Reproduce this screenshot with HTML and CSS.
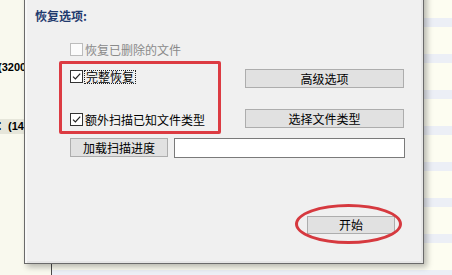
FILE: index.html
```html
<!DOCTYPE html>
<html lang="zh-CN">
<head>
<meta charset="utf-8">
<title>恢复选项</title>
<link rel="stylesheet" href="styles.css">
</head>
<body>
<div class="app">
  <div class="side">
    <div class="side-row r1">(3200MB)</div>
    <div class="side-row r2">：(14</div>
  </div>
  <div class="list"></div>
</div>

<div class="dialog">
  <div class="title">恢复选项:</div>
  <div class="opts">
    <label class="check disabled row1">
      <span class="box"></span><span class="lbl">恢复已删除的文件</span>
    </label>
    <div class="row row2">
      <label class="check">
        <span class="box"><svg viewBox="0 0 11 11" width="11" height="11"><path d="M2 5.6 L4.4 8 L9.2 2.6" fill="none" stroke="#222" stroke-width="1.2"/></svg></span><span class="lbl focus">完整恢复</span>
      </label>
      <button class="btn wide">高级选项</button>
    </div>
    <div class="row row3">
      <label class="check">
        <span class="box"><svg viewBox="0 0 11 11" width="11" height="11"><path d="M2 5.6 L4.4 8 L9.2 2.6" fill="none" stroke="#222" stroke-width="1.2"/></svg></span><span class="lbl">额外扫描已知文件类型</span>
      </label>
      <button class="btn wide">选择文件类型</button>
    </div>
    <div class="row row4">
      <button class="btn load">加载扫描进度</button>
      <input class="path" type="text" value="">
    </div>
    <div class="row row5">
      <button class="btn start">开始</button>
    </div>
  </div>
  <div class="mark mark-rect"></div>
  <div class="mark mark-ellipse"></div>
</div>
</body>
</html>
```

FILE: styles.css
```css
html, body {
  margin: 0;
  padding: 0;
}
body {
  width: 452px;
  height: 275px;
  overflow: hidden;
  position: relative;
  font-family: "Noto Sans CJK SC", "Microsoft YaHei", sans-serif;
  font-size: 12px;
  color: #000;
}

/* background application window */
.app {
  display: flex;
  height: 275px;
}
.side {
  flex: none;
  width: 51px;
  border-right: 1px solid #4a4a4a;
  background: #f9f9ee;
  display: flex;
  flex-direction: column;
}
.side-row {
  height: 15px;
  line-height: 15px;
  font-family: "Liberation Sans", "Noto Sans CJK SC", sans-serif;
  font-weight: bold;
  font-size: 11px;
  white-space: nowrap;
  text-indent: -2px;
  overflow: hidden;
}
.r1 {
  margin-top: 60px;
}
.r2 {
  margin-top: 44px;
  background: #e6e6da;
  text-indent: -3px;
}
.list {
  flex: 1;
  background: repeating-linear-gradient(to bottom,
    #fdfdf1 0px, #fdfdf1 27px,
    #eceff6 27px, #eceff6 40px,
    #fdfdf1 40px, #fdfdf1 63px);
  background-size: 100% 36px;
  background-position: 0 -9px;
}

/* dialog */
.dialog {
  position: absolute;
  left: 24px;
  top: -30px;
  width: 400px;
  height: 294px;
  box-sizing: border-box;
  border: 1px solid #6a6a6a;
  background: #f0f0f0;
  box-shadow: inset 2px 0 0 #f7f7f7, inset -2px -2px 0 #e6e6e6, 3px 3px 6px rgba(0, 0, 0, 0.28);
  padding: 37px 0 0 10px;
}
.title {
  height: 16px;
  line-height: 16px;
  font-weight: bold;
  color: #1f3a6e;
}
.opts {
  margin-left: 35px;
  display: flex;
  flex-direction: column;
}
.check {
  display: flex;
  align-items: center;
  gap: 2px;
  height: 13px;
  line-height: 13px;
  white-space: nowrap;
}
.box {
  flex: none;
  width: 13px;
  height: 13px;
  box-sizing: border-box;
  border: 1px solid #333;
  background: #fff;
  display: flex;
}
.box svg {
  display: block;
}
.disabled .box {
  border-color: #bcbcbc;
  background: #fbfbfb;
}
.disabled .lbl {
  color: #8a8a8a;
}
.focus {
  outline: 1px dotted #222;
  outline-offset: 0;
  padding: 0 1px;
  line-height: 12px;
}
.row1 {
  margin-top: 19px;
}
.row {
  display: flex;
}
.row .check {
  width: 175px;
  flex: none;
  align-self: flex-start;
}
.row2 {
  margin-top: 13px;
  height: 19px;
}
.row2 .check {
  margin-top: 1px;
}
.row3 {
  margin-top: 21px;
  height: 19px;
}
.row3 .check {
  margin-top: 4px;
}
.row4 {
  margin-top: 10px;
  gap: 6px;
  height: 20px;
}
.row5 {
  margin-top: 58px;
  padding-left: 237px;
}
.btn {
  font: inherit;
  color: #000;
  background: #e1e1e1;
  border: 1px solid #adadad;
  border-radius: 0;
  padding: 0;
  margin: 0;
  height: 19px;
  line-height: 16px;
  box-sizing: border-box;
}
.wide {
  width: 159px;
}
.load {
  width: 98px;
}
.start {
  width: 88px;
  height: 18px;
}
.path {
  width: 231px;
  height: 20px;
  box-sizing: border-box;
  border: 1px solid #7a7a7a;
  background: #fff;
  padding: 0 3px;
  margin: 0;
  font: inherit;
}

/* red annotation marks over the dialog */
.mark {
  position: absolute;
  box-sizing: border-box;
  pointer-events: none;
}
.mark-rect {
  left: 34px;
  top: 90px;
  width: 162px;
  height: 73px;
  border: 3px solid #dc3b42;
  border-radius: 2px;
}
.mark-ellipse {
  left: 270px;
  top: 233px;
  width: 107px;
  height: 40px;
  border: 3px solid #d6393f;
  border-radius: 50%;
}
```
